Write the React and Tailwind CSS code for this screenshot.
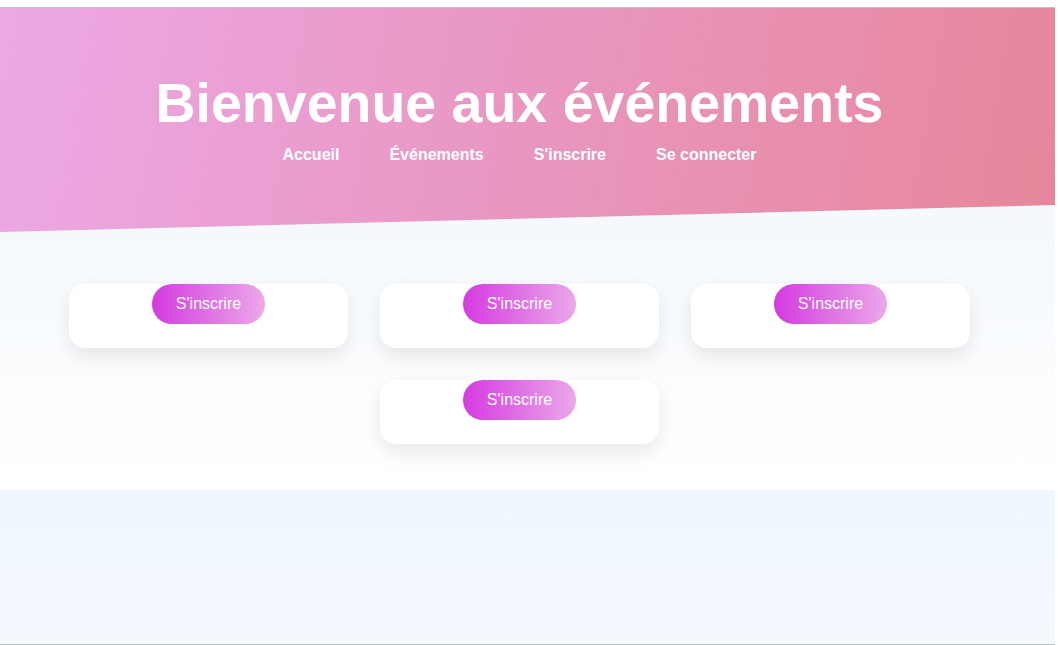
import React from "react";

const font = { fontFamily: '"Liberation Sans", Arial, sans-serif' };

function Card() {
  return (
    <div className="w-[279px] h-[64px] bg-white rounded-2xl shadow-[0_8px_20px_rgba(0,0,0,0.09)] flex flex-col items-center">
      <button className="h-10 px-6 rounded-full bg-[linear-gradient(90deg,#d53ae0,#eba8ea)] text-white text-[16px] leading-none flex items-center">
        S'inscrire
      </button>
    </div>
  );
}

export default function App() {
  return (
    <div className="w-[1058px] h-[645px] bg-white pt-[7px] overflow-hidden" style={font}>
      <div className="w-[1055px] border-t border-b border-[#b3c8c6] bg-[#f5f9fd]">
        <header className="h-[224px] pt-[63px] pr-4 flex flex-col items-center bg-[linear-gradient(100deg,#eca8e5_0%,#e998c4_45%,#e7869a_100%)] [clip-path:polygon(0_0,100%_0,100%_88%,0_100%)]">
          <h1 className="text-[55.5px] font-bold text-white leading-[64px]">Bienvenue aux événements</h1>
          <nav className="mt-[11px] flex gap-[50px] text-white font-bold text-[16px] leading-[18px]">
            <a>Accueil</a>
            <a>Événements</a>
            <a>S'inscrire</a>
            <a>Se connecter</a>
          </nav>
        </header>
        <section className="h-[258px] pt-[52px] pr-4 bg-[linear-gradient(180deg,#f5f9fd,#ffffff)] flex justify-center">
          <div className="w-[901px] flex flex-wrap justify-center gap-8 content-start">
            <Card />
            <Card />
            <Card />
            <Card />
          </div>
        </section>
        <div className="h-[154px] bg-[linear-gradient(180deg,#eff6fe,#f4f9fe)]"></div>
      </div>
    </div>
  );
}
